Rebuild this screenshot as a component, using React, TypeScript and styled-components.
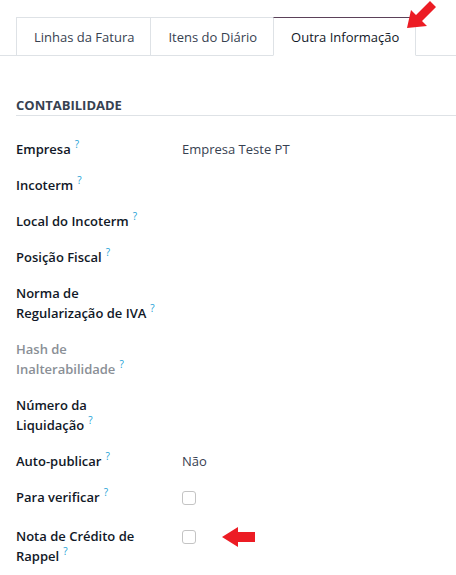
import React from 'react';
import styled, { createGlobalStyle } from 'styled-components';

const GlobalStyle = createGlobalStyle`
  body {
    margin: 0;
    background: #ffffff;
    font-family: 'Open Sans', 'Noto Sans', sans-serif;
    font-size: 13px;
    color: #111827;
  }
`;

const Page = styled.div`
  position: relative;
  width: 456px;
  height: 575px;
  overflow: hidden;
  padding-top: 17px;
  box-sizing: border-box;
`;

const TabBar = styled.div`
  display: flex;
  padding-left: 16px;
  border-bottom: 1px solid #dee2e6;
`;

const Tab = styled.div<{ $active?: boolean }>`
  height: 37px;
  display: flex;
  align-items: center;
  padding: 0 16px 0 17px;
  margin-left: -1px;
  margin-bottom: -1px;
  border: 1px solid #dee2e6;
  border-top-color: ${p => (p.$active ? '#5b4159' : '#dee2e6')};
  border-bottom-color: ${p => (p.$active ? '#ffffff' : '#dee2e6')};
  background: #ffffff;
  color: ${p => (p.$active ? '#111827' : '#374151')};
  &:first-child {
    margin-left: 0;
  }
`;

const Section = styled.div`
  padding: 40px 0 0 16px;
`;

const SectionTitle = styled.div`
  font-weight: 700;
  font-size: 13px;
  line-height: 19px;
  color: #374151;
  border-bottom: 1px solid #dee2e6;
  margin-bottom: 15px;
`;

const Row = styled.div`
  display: grid;
  grid-template-columns: 166px 1fr;
  padding: 8px 0;
  line-height: 20px;
`;

const Label = styled.div<{ $muted?: boolean }>`
  font-weight: 600;
  color: ${p => (p.$muted ? '#8a8f96' : '#111827')};
  padding-right: 12px;
`;

const Help = styled.span`
  color: #1a9fd6;
  font-weight: 400;
  font-size: 10px;
  line-height: 10px;
  margin-left: 4px;
  position: relative;
  top: -6px;
`;

const Value = styled.div`
  color: #374151;
`;

const Check = styled.span`
  display: inline-block;
  width: 12px;
  height: 12px;
  border: 1px solid #c4c4c4;
  border-radius: 3px;
  margin-top: 4px;
`;

const Arrow = styled.svg`
  position: absolute;
`;

const fields: { lines: string[]; value?: string; check?: boolean; muted?: boolean }[] = [
  { lines: ['Empresa'], value: 'Empresa Teste PT' },
  { lines: ['Incoterm'] },
  { lines: ['Local do Incoterm'] },
  { lines: ['Posição Fiscal'] },
  { lines: ['Norma de', 'Regularização de IVA'] },
  { lines: ['Hash de', 'Inalterabilidade'], muted: true },
  { lines: ['Número da', 'Liquidação'] },
  { lines: ['Auto-publicar'], value: 'Não' },
  { lines: ['Para verificar'], check: true },
  { lines: ['Nota de Crédito de', 'Rappel'], check: true },
];

export default function App() {
  return (
    <Page>
      <GlobalStyle />
      <TabBar>
        <Tab>Linhas da Fatura</Tab>
        <Tab>Itens do Diário</Tab>
        <Tab $active>Outra Informação</Tab>
      </TabBar>
      <Section>
        <SectionTitle>CONTABILIDADE</SectionTitle>
        {fields.map(f => (
          <Row key={f.lines.join(' ')}>
            <Label $muted={f.muted}>
              {f.lines.map((l, i) => (
                <React.Fragment key={l}>
                  {i > 0 && <br />}
                  {l}
                </React.Fragment>
              ))}
              <Help>?</Help>
            </Label>
            <Value>{f.check ? <Check /> : f.value}</Value>
          </Row>
        ))}
      </Section>
      <Arrow width="36" height="32" viewBox="0 0 36 32" style={{ left: 403, top: 0 }}>
        <polygon points="4,28 8,10 13,15 27,1 33,7 19,21 24,26" fill="#ec1c24" />
      </Arrow>
      <Arrow width="36" height="24" viewBox="0 0 36 24" style={{ left: 221, top: 525 }}>
        <polygon points="1,12 17,2 17,7 34,7 34,17 17,17 17,22" fill="#ec1c24" />
      </Arrow>
    </Page>
  );
}
